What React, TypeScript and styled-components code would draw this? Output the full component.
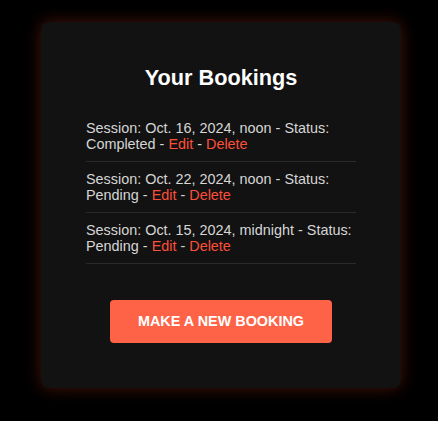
import styled, { createGlobalStyle } from 'styled-components';

const GlobalStyle = createGlobalStyle`
  html, body {
    margin: 0;
    padding: 0;
    background: #000;
  }
  body {
    font-family: "Liberation Sans", Arial, sans-serif;
  }
`;

const bookings = [
  { id: 1, session: 'Oct. 16, 2024, noon', status: 'Completed' },
  { id: 2, session: 'Oct. 22, 2024, noon', status: 'Pending' },
  { id: 3, session: 'Oct. 15, 2024, midnight', status: 'Pending' },
];

export default function App() {
  return (
    <Page>
      <GlobalStyle />
      <Card>
        <Title>Your Bookings</Title>
        <List>
          {bookings.map((b) => (
            <Item key={b.id}>
              Session: {b.session} - Status: {b.status} - <ActionLink href="#">Edit</ActionLink> -{' '}
              <ActionLink href="#">Delete</ActionLink>
            </Item>
          ))}
        </List>
        <NewButton>Make a New Booking</NewButton>
      </Card>
    </Page>
  );
}

const Page = styled.div`
  display: flex;
  justify-content: center;
  padding: 22px 0 0 4px;
  min-height: 421px;
  box-sizing: border-box;
`;

const Card = styled.div`
  width: 360px;
  height: 366px;
  box-sizing: border-box;
  padding: 20px 45px;
  background: #121212;
  border-radius: 8px;
  box-shadow: 0 0 16px rgba(255, 70, 30, 0.28);
  display: flex;
  flex-direction: column;
  align-items: center;
`;

const Title = styled.h2`
  margin: 23px 0 21px;
  font-size: 21.7px;
  line-height: 25px;
  font-weight: 700;
  color: #fff;
`;

const List = styled.ul`
  list-style: none;
  margin: 0;
  padding: 0;
  width: 100%;
`;

const Item = styled.li`
  padding: 9px 0;
  border-bottom: 1px solid #2a2a2a;
  font-size: 14.4px;
  line-height: 16px;
  color: #d6d6d6;
`;

const ActionLink = styled.a`
  color: #ff4f38;
  text-decoration: none;
`;

const NewButton = styled.button`
  margin-top: 36px;
  padding: 13px 28px 14px;
  border: none;
  border-radius: 4px;
  background: #ff6347;
  color: #fff;
  font-family: "Liberation Sans", Arial, sans-serif;
  font-size: 14.4px;
  line-height: 16px;
  font-weight: 700;
  text-transform: uppercase;
  cursor: pointer;
`;
